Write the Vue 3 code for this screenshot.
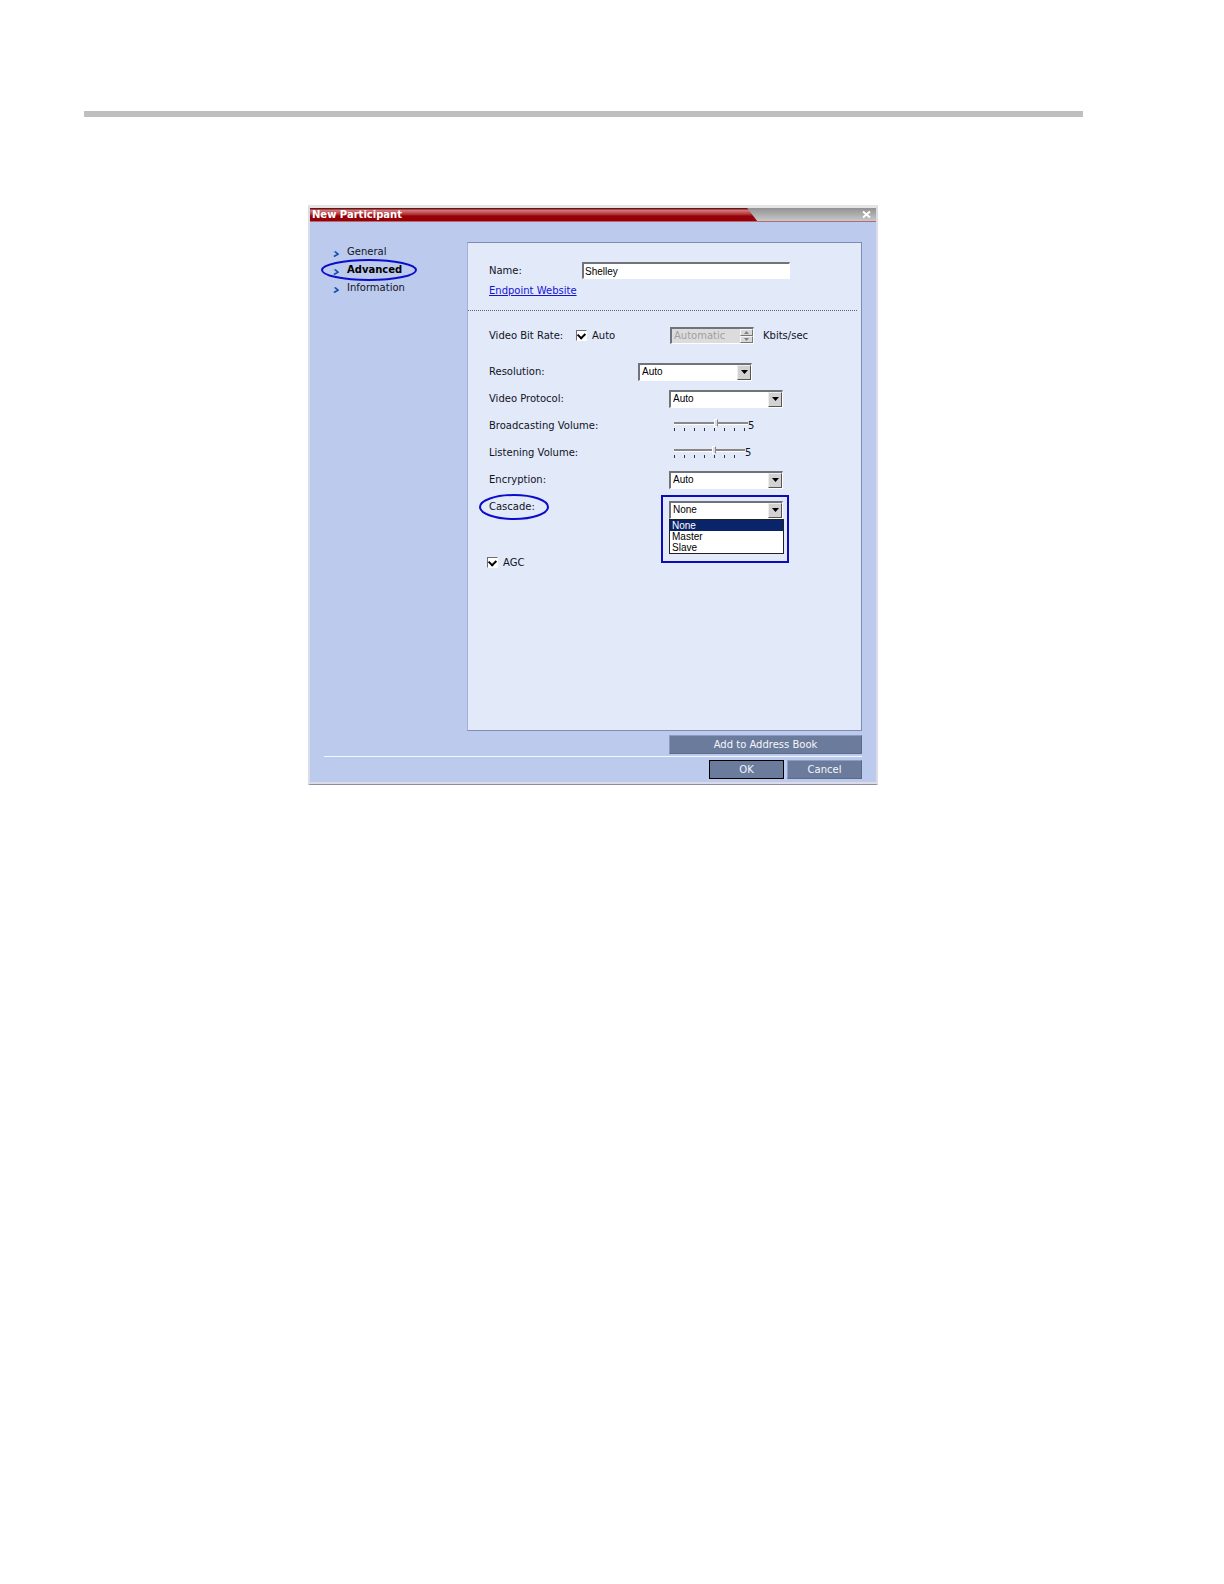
<template>
  <main class="page">
    <hr class="page-rule" />

    <section class="dialog" role="dialog" aria-labelledby="dialog-title">
      <header class="title-bar">
        <h1 id="dialog-title" class="title">New Participant</h1>
        <button class="close" type="button" aria-label="Close">
          <svg width="9" height="9" viewBox="0 0 9 9">
            <path d="M1 1.5 L8 7.5 M8 1.5 L1 7.5" stroke="#fff" stroke-width="2" />
          </svg>
        </button>
      </header>

      <div class="dialog-body">
        <div class="columns">
          <nav class="sections">
            <a
              v-for="section in sections"
              :key="section"
              href="#"
              class="section"
              :class="{ active: section === activeSection }"
              @click.prevent="activeSection = section"
            >
              <svg class="chevron" width="6" height="6" viewBox="0 0 6 6">
                <path d="M0.5 0.5 L5 3 L0.5 5.5" fill="none" stroke="#7fb2ee" stroke-width="1.4" />
                <path d="M2 0.5 L5 3.2 L1 5.5" fill="none" stroke="#164fae" stroke-width="1.6" />
              </svg>
              <span>{{ section }}</span>
              <svg v-if="section === 'Advanced'" class="ring" viewBox="0 0 96 24">
                <ellipse cx="48" cy="12" rx="47" ry="10" />
              </svg>
            </a>
          </nav>

          <form class="panel" @submit.prevent>
            <div class="identity">
              <div class="row">
                <label class="label label-short" for="name">Name:</label>
                <input id="name" v-model="name" class="text-input" type="text" />
              </div>
              <a class="website" href="#">Endpoint Website</a>
            </div>

            <div class="settings">
              <div class="row row-rate">
                <label class="label label-rate" for="rate">Video Bit Rate:</label>
                <span class="check-group">
                  <input id="rate-auto" v-model="autoRate" class="check" type="checkbox" />
                  <label for="rate-auto">Auto</label>
                </span>
                <span class="spinner">
                  <input id="rate" class="spinner-input" type="text" value="Automatic" disabled />
                  <span class="spinner-buttons">
                    <button type="button" aria-label="Increase" disabled>
                      <svg width="5" height="3" viewBox="0 0 5 3"><path d="M0 3 L2.5 0 L5 3 Z" fill="#808080" /></svg>
                    </button>
                    <button type="button" aria-label="Decrease" disabled>
                      <svg width="5" height="3" viewBox="0 0 5 3"><path d="M0 0 L2.5 3 L5 0 Z" fill="#808080" /></svg>
                    </button>
                  </span>
                </span>
                <span class="unit">Kbits/sec</span>
              </div>

              <div class="row">
                <label class="label label-medium" for="resolution">Resolution:</label>
                <span class="combo">
                  <select id="resolution"><option>Auto</option></select>
                  <span class="arrow"><svg width="7" height="4" viewBox="0 0 7 4"><path d="M0 0 H7 L3.5 4 Z" /></svg></span>
                </span>
              </div>

              <div class="row">
                <label class="label" for="protocol">Video Protocol:</label>
                <span class="combo">
                  <select id="protocol"><option>Auto</option></select>
                  <span class="arrow"><svg width="7" height="4" viewBox="0 0 7 4"><path d="M0 0 H7 L3.5 4 Z" /></svg></span>
                </span>
              </div>

              <div v-for="volume in volumes" :key="volume.id" class="row">
                <label class="label" :for="volume.id">{{ volume.label }}</label>
                <span class="slider" :class="{ 'slider-short': volume.ticks < 8 }">
                  <input :id="volume.id" v-model="volume.value" type="range" min="1" max="8" />
                  <span class="ticks"><i v-for="n in volume.ticks" :key="n"></i></span>
                </span>
                <output :for="volume.id">{{ volume.value }}</output>
              </div>

              <div class="row">
                <label class="label" for="encryption">Encryption:</label>
                <span class="combo">
                  <select id="encryption"><option>Auto</option></select>
                  <span class="arrow"><svg width="7" height="4" viewBox="0 0 7 4"><path d="M0 0 H7 L3.5 4 Z" /></svg></span>
                </span>
              </div>

              <div class="row row-cascade">
                <label class="label label-ringed" for="cascade">
                  Cascade:
                  <svg class="ring" viewBox="0 0 72 26">
                    <ellipse cx="36" cy="13" rx="34" ry="12" />
                  </svg>
                </label>
                <span class="combo combo-open">
                  <select id="cascade" v-model="cascade">
                    <option v-for="mode in cascadeModes" :key="mode">{{ mode }}</option>
                  </select>
                  <span class="arrow"><svg width="7" height="4" viewBox="0 0 7 4"><path d="M0 0 H7 L3.5 4 Z" /></svg></span>
                  <ul class="options" role="listbox">
                    <li
                      v-for="mode in cascadeModes"
                      :key="mode"
                      role="option"
                      :aria-selected="mode === cascade"
                      :class="{ selected: mode === cascade }"
                      @click="cascade = mode"
                    >{{ mode }}</li>
                  </ul>
                  <span class="callout"></span>
                </span>
              </div>

              <div class="row row-agc">
                <span class="check-group">
                  <input id="agc" v-model="agc" class="check" type="checkbox" />
                  <label for="agc">AGC</label>
                </span>
              </div>
            </div>
          </form>
        </div>

        <div class="address-actions">
          <button class="button button-wide" type="button">Add to Address Book</button>
        </div>
        <footer class="footer">
          <button class="button button-default" type="button">OK</button>
          <button class="button" type="button">Cancel</button>
        </footer>
      </div>
    </section>
  </main>
</template>

<script setup>
import { ref } from 'vue';

const sections = ['General', 'Advanced', 'Information'];
const activeSection = ref('Advanced');

const name = ref('Shelley');
const autoRate = ref(true);
const agc = ref(true);

const volumes = ref([
  { id: 'broadcasting', label: 'Broadcasting Volume:', value: 5, ticks: 8 },
  { id: 'listening', label: 'Listening Volume:', value: 5, ticks: 7 },
]);

const cascadeModes = ['None', 'Master', 'Slave'];
const cascade = ref('None');
</script>

<style>
body {
  margin: 0;
  background: #fff;
}
</style>

<style scoped>
* {
  box-sizing: border-box;
}

.page {
  padding: 111px 141px 80px 84px;
  font-family: "DejaVu Sans", Verdana, sans-serif;
  font-size: 10px;
  line-height: 12px;
  color: #10131e;
}

.page-rule {
  height: 6px;
  margin: 0 0 88px;
  border: 0;
  background: #bfbfbf;
}

.dialog {
  max-width: 570px;
  margin-left: 224px;
  border: 2px solid #dcdce8;
  border-top: 3px solid #e6e4e6;
  border-bottom: 1px solid #8c8c9c;
  background: #bccaee;
}

/* 标题栏 */
.title-bar {
  display: flex;
  justify-content: space-between;
  height: 14px;
  border-bottom: 1px solid #b56a72;
  background: linear-gradient(#929292, #c8c8c8);
}

.title {
  width: 79%;
  margin: 0;
  padding-left: 2px;
  font-size: 10px;
  line-height: 13px;
  font-weight: bold;
  color: #fff;
  background: linear-gradient(#6e1016 0, #6e1016 1px, #d08080 2px, #b83a3e 6px, #960008 8px, #960008 100%);
  clip-path: polygon(0 0, calc(100% - 10px) 0, 100% 100%, 0 100%);
}

.close {
  display: flex;
  align-items: center;
  margin-right: 5px;
  padding: 0;
  border: 0;
  background: none;
}

.dialog-body {
  padding: 20px 14px 3px;
  border-bottom: 2px solid #dcdce8;
}

.columns {
  display: flex;
}

/* 左侧导航 */
.sections {
  flex: 0 0 143px;
  padding: 1px 0 0 9px;
}

.section {
  position: relative;
  display: flex;
  align-items: center;
  gap: 8px;
  height: 18px;
  color: #10131e;
  text-decoration: none;
}

.section.active {
  font-weight: bold;
  color: #000;
}

.chevron {
  margin-top: 4px;
}

.ring {
  position: absolute;
  overflow: visible;
}

.ring ellipse {
  fill: none;
  stroke: #0c0ccc;
  stroke-width: 2;
}

.section .ring {
  left: -12px;
  top: -3px;
  width: 96px;
  height: 24px;
}

/* 参数面板 */
.panel {
  flex: 1;
  min-height: 489px;
  border: 1px solid #7d8bb5;
  border-left-color: #a3b1d8;
  background: #e2e9f9;
}

.identity {
  margin-right: 4px;
  padding: 14px 0 13px 21px;
  border-bottom: 1px dotted #5c6484;
}

.identity .website {
  display: table;
  margin-top: 1px;
  color: #1414d8;
}

.settings {
  padding: 11px 0 0 21px;
}

.row {
  display: flex;
  align-items: center;
  height: 27px;
}

.row-rate {
  margin-bottom: 9px;
}

.row-cascade {
  margin-bottom: 29px;
}

.row-agc {
  margin-left: -2px;
}

.label {
  flex: 0 0 180px;
}

.label-short {
  flex-basis: 93px;
}

.label-rate {
  flex-basis: 87px;
}

.label-medium {
  flex-basis: 149px;
}

.label-ringed {
  position: relative;
}

.label-ringed .ring {
  left: -11px;
  top: -7px;
  width: 72px;
  height: 26px;
}

.text-input,
.spinner,
.combo {
  border: 1px solid #fff;
  border-top: 2px solid #70727c;
  border-left: 2px solid #70727c;
  background: #fff;
}

.text-input {
  width: 208px;
  height: 17px;
  padding: 0 1px;
  font-family: "Liberation Sans", Arial, sans-serif;
  font-size: 10px;
  line-height: 12px;
  color: #000;
  outline: 0;
}

.check-group {
  display: flex;
  align-items: center;
  gap: 5px;
  width: 94px;
}

.check {
  appearance: none;
  display: flex;
  width: 11px;
  height: 11px;
  margin: 0;
  border: 1px solid #fff;
  border-top-color: #6c6c74;
  border-left-color: #6c6c74;
  background: #fff;
}

.check:checked::before {
  content: "";
  width: 7px;
  height: 4px;
  margin: 1px;
  border-left: 2px solid #000;
  border-bottom: 2px solid #000;
  transform: rotate(-45deg);
}

.spinner {
  display: flex;
  width: 84px;
  height: 17px;
  background: #dcdcdc;
}

.spinner-input {
  flex: 1;
  min-width: 0;
  padding: 0 2px;
  border: 0;
  font: inherit;
  color: #a0a0a0;
  background: none;
}

.spinner-buttons {
  display: flex;
  flex-direction: column;
  width: 13px;
}

.spinner-buttons button {
  flex: 1;
  display: flex;
  align-items: center;
  justify-content: center;
  min-height: 0;
  padding: 0;
  border: 1px solid #f6f6f6;
  border-right-color: #777;
  border-bottom-color: #777;
  background: #d8d8d8;
}

.unit {
  margin-left: 9px;
}

.combo {
  position: relative;
  display: flex;
  width: 114px;
  height: 18px;
}

.combo select {
  appearance: none;
  flex: 1;
  padding: 0 2px;
  border: 0;
  border-radius: 0;
  font-family: "Liberation Sans", Arial, sans-serif;
  font-size: 10px;
  line-height: 12px;
  color: #000;
  background: #fff;
  outline: 0;
}

.arrow {
  display: flex;
  align-items: center;
  justify-content: center;
  width: 14px;
  border: 1px solid #eee;
  border-right-color: #555;
  border-bottom-color: #555;
  background: #d2d2d2;
}

.combo-open {
  margin-top: 6px;
}

.options {
  position: absolute;
  z-index: 1;
  top: 16px;
  left: -2px;
  width: 115px;
  margin: 0;
  padding: 0;
  list-style: none;
  border: 1px solid #222;
  font-family: "Liberation Sans", Arial, sans-serif;
  line-height: 11px;
  color: #000;
  background: #fff;
}

.options li {
  padding-left: 2px;
}

.options .selected {
  color: #fff;
  background: #0a246a;
}

.callout {
  position: absolute;
  top: -8px;
  left: -10px;
  width: 128px;
  height: 68px;
  border: 2px solid #0c0cb8;
  pointer-events: none;
}

/* 音量滑块 */
.slider {
  display: flex;
  flex-direction: column;
  width: 74px;
  margin-left: 5px;
}

.slider-short {
  width: 71px;
}

.slider input {
  appearance: none;
  width: 100%;
  height: 8px;
  margin: 0;
  background: linear-gradient(transparent 3px, #888 3px, #888 5px, #fff 5px, #fff 6px, transparent 6px);
}

.slider input::-webkit-slider-thumb {
  appearance: none;
  width: 4px;
  height: 8px;
  border: 1px solid #fff;
  border-right-color: #888;
  background: #dedede;
}

.ticks {
  display: flex;
  gap: 9px;
  padding: 1px 0;
}

.ticks i {
  width: 1px;
  height: 3px;
  background: #333;
}

/* 底部按钮 */
.address-actions {
  display: flex;
  justify-content: flex-end;
  padding: 4px 0 2px;
  border-bottom: 1px solid #f2f8ff;
}

.footer {
  display: flex;
  justify-content: flex-end;
  gap: 3px;
  padding-top: 3px;
}

.button {
  width: 75px;
  height: 19px;
  padding: 0;
  border: 1px solid #8c9cc0;
  border-right-color: #5c6a88;
  border-bottom-color: #5c6a88;
  font: inherit;
  color: #f4f6fc;
  background: #6b7b9b;
}

.button-wide {
  width: 193px;
}

.button-default {
  border-color: #000;
}
</style>
